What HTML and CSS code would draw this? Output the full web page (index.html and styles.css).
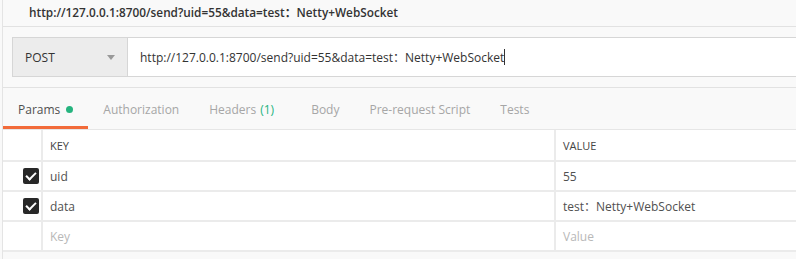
FILE: index.html
```html
<!DOCTYPE html>
<html lang="en">
<head>
    <meta charset="UTF-8">
    <meta name="viewport" content="width=device-width, initial-scale=1.0">
    <title>Request</title>
    <link rel="stylesheet" href="styles.css">
</head>
<body>
    <div class="app">
        <!-- Request name -->
        <div class="title-bar">http://127.0.0.1:8700/send?uid=55&amp;data=test：Netty+WebSocket</div>

        <!-- Method + URL -->
        <div class="request">
            <div class="method">
                <span>POST</span>
                <span class="caret"></span>
            </div>
            <div class="url">http://127.0.0.1:8700/send?uid=55&amp;data=test：Netty+WebSocket<span class="cursor"></span></div>
        </div>

        <!-- Tabs -->
        <div class="tabs">
            <div class="tab active">Params <span class="dot"></span></div>
            <div class="tab">Authorization</div>
            <div class="tab">Headers <span class="count">(1)</span></div>
            <div class="tab">Body</div>
            <div class="tab">Pre-request Script</div>
            <div class="tab">Tests</div>
        </div>

        <!-- Params table -->
        <div class="params">
            <div class="cell"></div>
            <div class="cell head">KEY</div>
            <div class="cell head">VALUE</div>

            <div class="cell check"><span class="box"></span></div>
            <div class="cell">uid</div>
            <div class="cell">55</div>

            <div class="cell check"><span class="box"></span></div>
            <div class="cell">data</div>
            <div class="cell">test：Netty+WebSocket</div>

            <div class="cell"></div>
            <div class="cell placeholder">Key</div>
            <div class="cell placeholder">Value</div>
        </div>
    </div>
</body>
</html>
```

FILE: styles.css
```css
body { margin: 0; background: #f9f9f9; font-family: "Open Sans", "Noto Sans CJK SC", sans-serif; font-size: 12px; color: #505050; }
.app { margin-left: 2px; border-left: 1px solid #e4e4e4; height: 259px; overflow: hidden; }

.title-bar { height: 26px; line-height: 25px; padding-left: 26px; font-size: 11.8px; font-weight: 600; color: #333; border-bottom: 1px solid #e2e2e2; white-space: nowrap; }

.request { display: flex; height: 38px; margin: 10px 0 10px 9px; border: 1px solid #d6d6d6; border-right: none; }
.method { width: 90px; padding: 0 12px; display: flex; align-items: center; justify-content: space-between; background: #ececec; border-right: 1px solid #d6d6d6; color: #333; }
.caret { width: 0; height: 0; border-left: 4px solid transparent; border-right: 4px solid transparent; border-top: 5px solid #999; }
.url { flex: 1; display: flex; align-items: center; padding-left: 12px; background: #fff; color: #333; white-space: nowrap; }
.cursor { display: inline-block; width: 1px; height: 16px; background: #333; }

.tabs { display: flex; height: 41px; border-top: 1px solid #e2e2e2; border-bottom: 1px solid #e6e6e6; }
.tab { display: flex; align-items: center; padding: 1px 15px 0; color: #a6a6a6; font-size: 12px; }
.tab.active { color: #505050; box-shadow: inset 0 -3px 0 #f26b3a; }
.dot { width: 7px; height: 7px; margin-left: 6px; border-radius: 50%; background: #26b47f; }
.count { margin: 0 7px 0 4px; color: #26b47f; }

.params { display: grid; grid-template-columns: 38px 511px 1fr; grid-template-rows: 30px 28px 28px 28px; gap: 2px; padding-bottom: 2px; background: #ebebeb; }
.cell { display: flex; align-items: center; padding-left: 7px; background: #fff; color: #505050; }
.cell.head { font-size: 11px; color: #444; }
.cell.placeholder { color: #b8b8b8; }
.check { justify-content: flex-end; padding: 0 2px 0 0; }
.box { position: relative; width: 16px; height: 16px; border-radius: 2px; background: #282828; }
.box::after { content: ""; position: absolute; left: 5px; top: 2px; width: 4px; height: 8px; border: solid #fff; border-width: 0 2px 2px 0; transform: rotate(45deg); }
```
